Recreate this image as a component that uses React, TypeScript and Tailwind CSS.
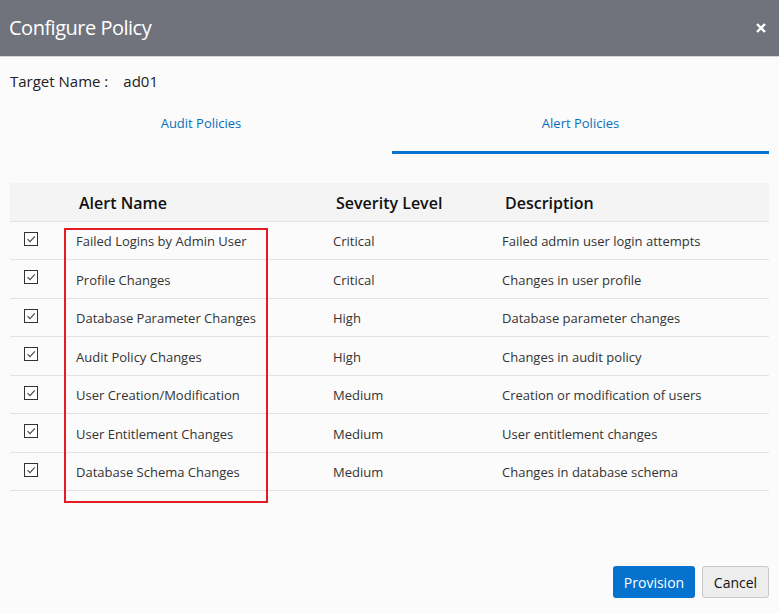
import React from "react";

const rows = [
    { name: "Failed Logins by Admin User", level: "Critical", desc: "Failed admin user login attempts" },
    { name: "Profile Changes", level: "Critical", desc: "Changes in user profile" },
    { name: "Database Parameter Changes", level: "High", desc: "Database parameter changes" },
    { name: "Audit Policy Changes", level: "High", desc: "Changes in audit policy" },
    { name: "User Creation/Modification", level: "Medium", desc: "Creation or modification of users" },
    { name: "User Entitlement Changes", level: "Medium", desc: "User entitlement changes" },
    { name: "Database Schema Changes", level: "Medium", desc: "Changes in database schema" },
];

function Check() {
    return (
        <svg width="14" height="14" viewBox="0 0 14 14">
            <rect x="0.5" y="0.5" width="13" height="13" fill="#fff" stroke="#333" />
            <path d="M3.5 7.2 L6 9.6 L10.8 4.4" fill="none" stroke="#444" strokeWidth="1.1" />
        </svg>
    );
}

export default function App() {
    return (
        <div className="flex h-[613px] w-[779px] flex-col bg-[#fbfbfb] text-[#333]" style={{ fontFamily: '"Open Sans", "Noto Sans", sans-serif' }}>
            {/* header */}
            <div className="flex h-[57px] items-center justify-between border-b border-[#d6d6d6] bg-[#70737c] pl-[9px] pr-[12px]">
                <span className="text-[20px] tracking-[-0.5px] text-white">Configure Policy</span>
                <svg width="12" height="12" viewBox="0 0 12 12">
                    <path d="M2 2 L10 10 M10 2 L2 10" stroke="#fff" strokeWidth="2.4" />
                </svg>
            </div>

            <div className="flex flex-1 flex-col px-[10px]">
                <div className="mt-[13px] flex text-[15px] text-[#222]">
                    <span>Target Name :</span>
                    <span className="ml-[15px]">ad01</span>
                </div>

                {/* tabs */}
                <div className="mt-[20px] flex">
                    <div className="flex h-[41px] w-[382px] items-start justify-center pt-[1px] text-[13px] text-[#0a6fb8]">Audit Policies</div>
                    <div className="flex h-[41px] flex-1 items-start justify-center border-b-[3px] border-[#0572ce] pt-[1px] text-[13px] text-[#0a6fb8]">Alert Policies</div>
                </div>

                {/* table */}
                <div className="mt-[29px]">
                    <div className="flex h-[39px] items-center border-b border-[#e2e2e2] bg-[#f4f4f4] pt-[2px] text-[16px] font-semibold text-[#111]">
                        <span className="ml-[69px] w-[257px]">Alert Name</span>
                        <span className="w-[169px]">Severity Level</span>
                        <span>Description</span>
                    </div>
                    <div className="relative">
                        {rows.map((r) => (
                            <div key={r.name} className="flex h-[38.5px] items-center border-b border-[#e2e2e2] pt-[3px] text-[13px]">
                                <span className="ml-[14px] mt-[-6px] flex w-[52px]"><Check /></span>
                                <span className="w-[257px]">{r.name}</span>
                                <span className="w-[169px]">{r.level}</span>
                                <span>{r.desc}</span>
                            </div>
                        ))}
                        <div className="absolute left-[54px] top-[6px] h-[275px] w-[204px] border-2 border-[#e31b23]" />
                    </div>
                </div>

                <div className="mt-auto mb-[15px] flex justify-end gap-[7px]">
                    <button className="h-[32px] w-[82px] rounded-[3px] bg-[#0572ce] text-[14px] text-white">Provision</button>
                    <button className="h-[32px] w-[67px] rounded-[3px] border border-[#c8c8c8] bg-[#ededed] text-[14px] text-[#111]">Cancel</button>
                </div>
            </div>
        </div>
    );
}
